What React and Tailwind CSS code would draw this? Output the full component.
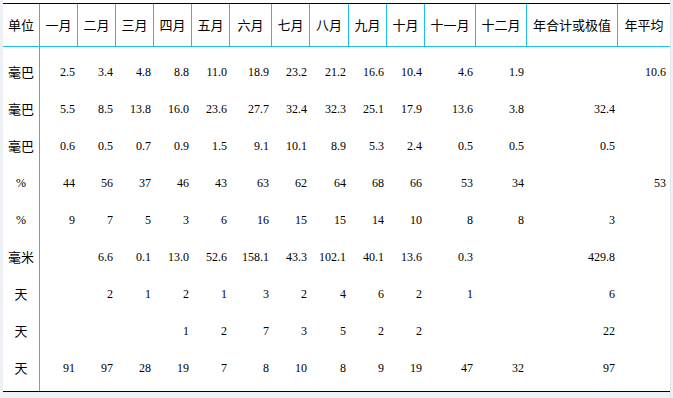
import React from 'react';

const COLS = 'grid-cols-[37px_38px_38px_38px_38px_38px_42px_38px_39px_38px_38px_51px_51px_91px_52px]';

const HEADERS = ['单位', '一月', '二月', '三月', '四月', '五月', '六月', '七月', '八月', '九月', '十月', '十一月', '十二月', '年合计或极值', '年平均'];

const ROWS = [
  ['毫巴', '2.5', '3.4', '4.8', '8.8', '11.0', '18.9', '23.2', '21.2', '16.6', '10.4', '4.6', '1.9', '', '10.6'],
  ['毫巴', '5.5', '8.5', '13.8', '16.0', '23.6', '27.7', '32.4', '32.3', '25.1', '17.9', '13.6', '3.8', '32.4', ''],
  ['毫巴', '0.6', '0.5', '0.7', '0.9', '1.5', '9.1', '10.1', '8.9', '5.3', '2.4', '0.5', '0.5', '0.5', ''],
  ['%', '44', '56', '37', '46', '43', '63', '62', '64', '68', '66', '53', '34', '', '53'],
  ['%', '9', '7', '5', '3', '6', '16', '15', '15', '14', '10', '8', '8', '3', ''],
  ['毫米', '', '6.6', '0.1', '13.0', '52.6', '158.1', '43.3', '102.1', '40.1', '13.6', '0.3', '', '429.8', ''],
  ['天', '', '2', '1', '2', '1', '3', '2', '4', '6', '2', '1', '', '6', ''],
  ['天', '', '', '', '1', '2', '7', '3', '5', '2', '2', '', '', '22', ''],
  ['天', '91', '97', '28', '19', '7', '8', '10', '8', '9', '19', '47', '32', '97', ''],
];

const cjk = "font-['Noto_Sans_CJK_SC','Noto_Sans',sans-serif]";
const serif = "font-['Liberation_Serif','Noto_Sans_CJK_SC',serif]";

function rowHeight(i) {
  if (i === 0) return 'h-[43px] pt-[6px]';
  if (i === ROWS.length - 1) return 'h-[42px] pb-[5px]';
  return 'h-[37px]';
}

export default function App() {
  return (
    <div className="w-[673px] h-[398px] bg-[#eef2f7] flex overflow-hidden">
      <div className="w-[3px] shrink-0" />
      <div className="w-[667px] shrink-0 flex flex-col">
        <div className="bg-white pt-[3px]">
          <div className="border-t border-b border-black">
            {/* header */}
            <div className={`grid ${COLS} border-b border-[#1cc2ef]`}>
              {HEADERS.map((h, i) => (
                <div
                  key={h}
                  className={`h-[42px] flex items-center justify-center text-[13px] text-black ${cjk} ${i < HEADERS.length - 1 ? 'border-r border-[#1cc2ef]' : ''}`}
                >
                  {h}
                </div>
              ))}
            </div>
            {/* body */}
            {ROWS.map((row, r) => (
              <div key={r} className={`grid ${COLS}`}>
                {row.map((v, c) =>
                  c === 0 ? (
                    <div
                      key={c}
                      className={`${rowHeight(r)} flex items-center justify-center border-r border-[#1cc2ef] text-black ${v === '%' ? `${serif} text-[12px]` : `${cjk} text-[13px]`}`}
                    >
                      {v}
                    </div>
                  ) : (
                    <div
                      key={c}
                      className={`${rowHeight(r)} flex items-center justify-end ${c === row.length - 1 ? 'pr-[4px]' : 'pr-[3px]'} text-[12px] text-black ${serif}`}
                    >
                      {v}
                    </div>
                  )
                )}
              </div>
            ))}
          </div>
        </div>
      </div>
      <div className="w-[3px] shrink-0 border-l border-[#dfe5ec]" />
    </div>
  );
}
